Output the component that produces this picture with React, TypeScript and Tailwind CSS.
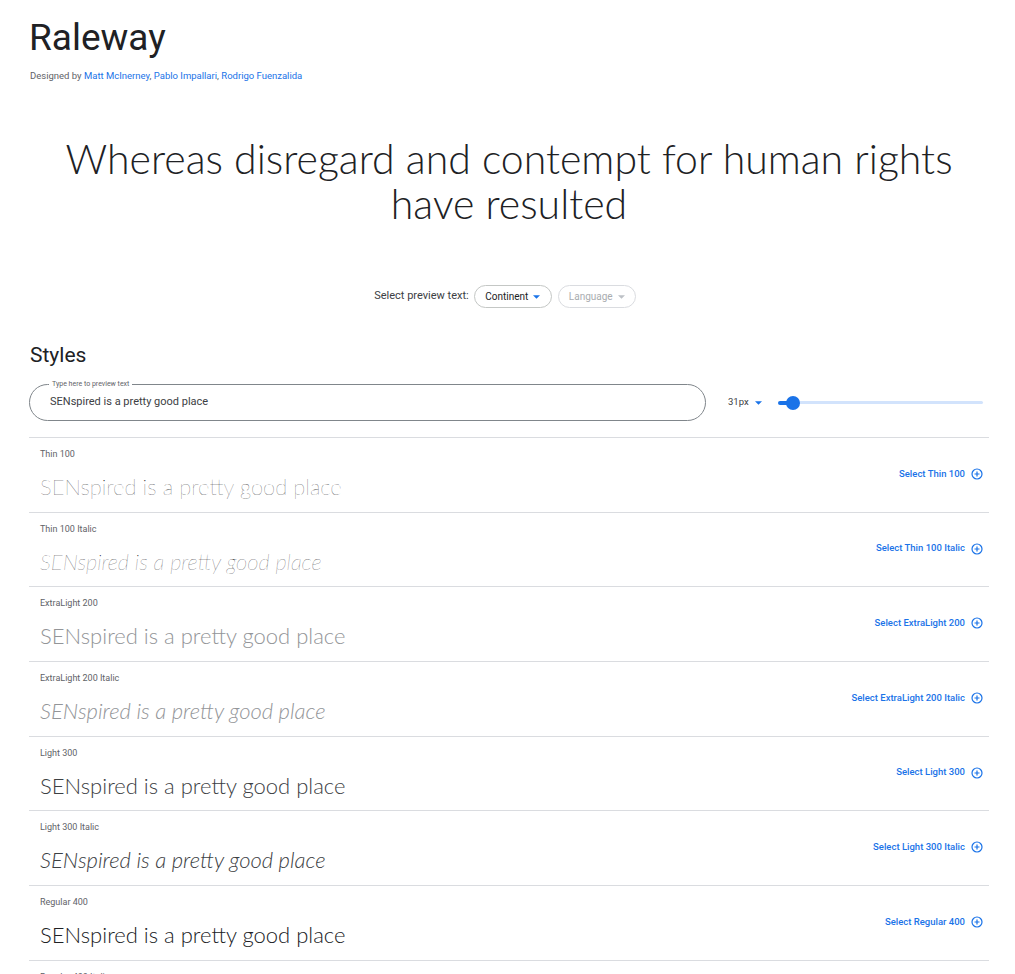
import React from 'react';

// sample rows, Lato stands in for Raleway so weights/colours are tuned by eye
const rows = [
  { name: 'Thin 100', cls: 'font-thin text-[#202124]', italic: false },
  { name: 'Thin 100 Italic', cls: 'font-thin text-[#202124]', italic: true },
  { name: 'ExtraLight 200', cls: 'font-light text-[#939598]', italic: false },
  { name: 'ExtraLight 200 Italic', cls: 'font-light text-[#939598]', italic: true },
  { name: 'Light 300', cls: 'font-light text-[#3c4043]', italic: false },
  { name: 'Light 300 Italic', cls: 'font-light text-[#3c4043]', italic: true },
  { name: 'Regular 400', cls: 'font-light text-[#202124]', italic: false },
  { name: 'Regular 400 Italic', cls: 'font-light text-[#202124]', italic: true },
];

function PlusCircle() {
  return (
    <svg width="12" height="12" viewBox="0 0 24 24" fill="none" stroke="#1a73e8" strokeWidth="2.4">
      <circle cx="12" cy="12" r="10" />
      <path d="M12 7v10M7 12h10" />
    </svg>
  );
}

function Caret({ color }: { color: string }) {
  return (
    <svg width="7" height="4" viewBox="0 0 10 5">
      <path d="M0 0h10L5 5z" fill={color} />
    </svg>
  );
}

export default function App() {
  return (
    <div className="h-[974px] bg-white text-[#202124] font-['Roboto',sans-serif] pl-[29px] pr-[26px] pt-[14px] overflow-hidden">
      {/* header */}
      <h1 className="text-[37px] leading-[48px] text-[#202124]">Raleway</h1>
      <p className="text-[9.5px] leading-[12px] mt-[8px] pl-[1px] text-[#5f6368]">
        Designed by <span className="text-[#1a73e8]">Matt McInerney</span>,{' '}
        <span className="text-[#1a73e8]">Pablo Impallari</span>,{' '}
        <span className="text-[#1a73e8]">Rodrigo Fuenzalida</span>
      </p>

      {/* hero */}
      <div className="mt-[54px] text-center font-['Lato',sans-serif] font-light text-[41px] leading-[45px] text-[#202124] px-[10px]">
        Whereas disregard and contempt for human rights
        <br />
        have resulted
      </div>

      {/* preview select */}
      <div className="mt-[59px] pr-[8px] flex items-center justify-center gap-[6px] text-[11px]">
        <span className="text-[#3c4043] mr-[-1px]">Select preview text:</span>
        <div className="h-[23px] w-[78px] rounded-full border border-[#c4c7c5] flex items-center justify-center gap-[5px] text-[#202124] text-[10px]">
          Continent <Caret color="#1a73e8" />
        </div>
        <div className="h-[23px] w-[78px] rounded-full border border-[#dadce0] flex items-center justify-center gap-[5px] text-[#a9acaf] text-[10px]">
          Language <Caret color="#bdc1c6" />
        </div>
      </div>

      {/* styles */}
      <h2 className="mt-[34px] text-[21px] leading-[26px] pl-[1px] text-[#202124]">Styles</h2>

      <div className="mt-[16px] flex items-center">
        <div className="relative w-[677px] h-[37px] rounded-full border border-[#80868b] flex items-center pl-[20px]">
          <span className="absolute left-[19px] top-[-6px] bg-white px-[3px] text-[7px] leading-[10px] text-[#5f6368]">
            Type here to preview text
          </span>
          <span className="text-[11px] text-[#3c4043]">SENspired is a pretty good place</span>
        </div>
        <div className="ml-[22px] flex items-center gap-[6px] text-[9.5px] text-[#3c4043]">
          31px <Caret color="#1a73e8" />
        </div>
        <div className="ml-[16px] flex-1 flex items-center mr-[6px]">
          <div className="w-[10px] h-[4px] rounded-l-full bg-[#1a73e8]" />
          <div className="w-[14px] h-[14px] rounded-full bg-[#1a73e8] -ml-[2px] -mr-[2px] relative z-10" />
          <div className="flex-1 h-[3px] rounded-r-full bg-[#d2e3fc]" />
        </div>
      </div>

      {/* rows */}
      <div className="mt-[16px]">
        {rows.map((r) => (
          <div
            key={r.name}
            className="h-[74.7px] border-t border-[#dadce0] flex items-center justify-between pl-[11px] pr-[6px]"
          >
            <div className="self-start pt-[9px]">
              <div className="text-[9px] leading-[14px] text-[#5f6368]">{r.name}</div>
              <div
                className={`mt-[11px] font-['Lato',sans-serif] text-[22px] leading-[30px] ${r.cls} ${
                  r.italic ? 'italic' : ''
                }`}
              >
                SENspired is a pretty good place
              </div>
            </div>
            <div className="flex items-center gap-[6px] text-[9.5px] font-medium text-[#1a73e8] mt-[-2px]">
              Select {r.name} <PlusCircle />
            </div>
          </div>
        ))}
      </div>
    </div>
  );
}
